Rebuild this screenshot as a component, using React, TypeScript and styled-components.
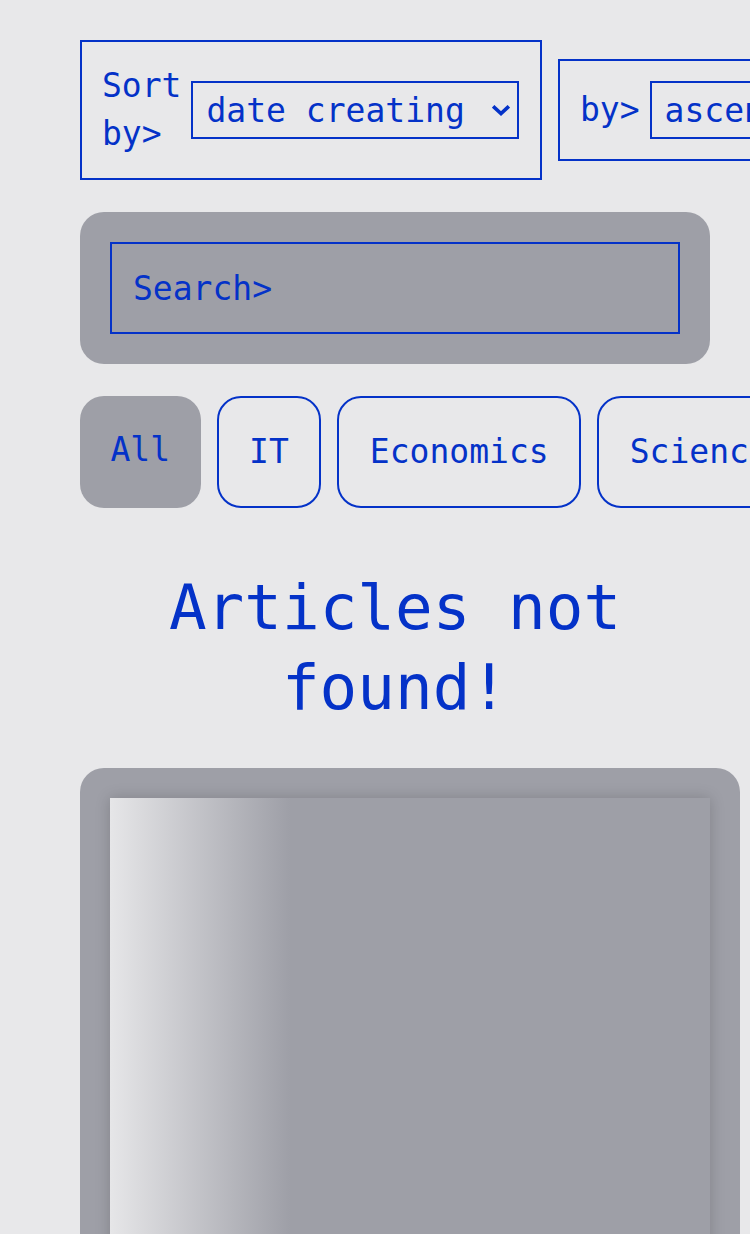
import React from 'react';
import styled, { createGlobalStyle } from 'styled-components';

const BLUE = '#0432c8';
const GRAY = '#9e9fa7';
const BG = '#e8e8ea';

const GlobalStyle = createGlobalStyle`
  html, body {
    margin: 0;
    padding: 0;
    background: ${BG};
    overflow: hidden;
  }
  body {
    font-family: 'DejaVu Sans Mono', 'Liberation Mono', monospace;
    color: ${BLUE};
  }
`;

const Page = styled.main`
  width: 630px;
  padding: 40px 0 0 80px;
  display: flex;
  flex-direction: column;
`;

const SortRow = styled.div`
  display: flex;
  align-items: center;
  gap: 16px;
`;

const SortBox = styled.label<{ $width: number }>`
  flex-shrink: 0;
  box-sizing: border-box;
  width: ${(p) => p.$width}px;
  display: flex;
  align-items: center;
  gap: 10px;
  padding: 20px;
  border: 2px solid ${BLUE};
`;

const SortLabel = styled.span`
  width: min-content;
  font-size: 33px;
  line-height: 48px;
`;

const SelectWrap = styled.div`
  position: relative;
  display: flex;
`;

const Select = styled.select<{ $width: number }>`
  appearance: none;
  box-sizing: border-box;
  width: ${(p) => p.$width}px;
  height: 58px;
  padding: 0 40px 0 13px;
  border: 2px solid ${BLUE};
  border-radius: 0;
  background: transparent;
  color: ${BLUE};
  font-family: inherit;
  font-size: 33px;
  outline: none;
`;

const Chevron = styled.svg`
  position: absolute;
  right: 9px;
  top: 50%;
  width: 18px;
  height: 11px;
  margin-top: -5px;
  pointer-events: none;
`;

const SearchPanel = styled.div`
  margin-top: 32px;
  padding: 30px;
  border-radius: 24px;
  background: ${GRAY};
`;

const SearchInput = styled.input`
  box-sizing: border-box;
  display: block;
  width: 100%;
  height: 92px;
  padding: 0 21px;
  border: 2px solid ${BLUE};
  background: transparent;
  color: ${BLUE};
  font-family: inherit;
  font-size: 33px;
  outline: none;

  &::placeholder {
    color: ${BLUE};
    opacity: 1;
  }
`;

const Chips = styled.div`
  margin-top: 32px;
  display: flex;
  gap: 16px;
`;

const Chip = styled.div<{ $active?: boolean }>`
  flex-shrink: 0;
  padding: 30px 30.5px;
  border-radius: 24px;
  font-size: 33px;
  line-height: 48px;
  border: ${(p) => (p.$active ? 'none' : `2px solid ${BLUE}`)};
  background: ${(p) => (p.$active ? GRAY : 'transparent')};
`;

const Title = styled.h1`
  margin: 60px 0 40px;
  text-align: center;
  font-size: 62.6px;
  line-height: 80px;
  font-weight: 400;
`;

const Card = styled.div`
  width: 600px;
  padding: 30px;
  border-radius: 24px;
  background: ${GRAY};
`;

const Thumb = styled.div`
  height: 700px;
  background: linear-gradient(90deg, #e6e6e8 0%, ${GRAY} 30%);
  box-shadow: 0 0 14px rgba(0, 0, 0, 0.18);
`;

const categories = ['All', 'IT', 'Economics', 'Science', 'Design'];

const Dropdown = ({
  width,
  value,
  options,
}: {
  width: number;
  value: string;
  options: [string, string][];
}) => (
  <SelectWrap>
    <Select $width={width} defaultValue={value}>
      {options.map(([v, label]) => (
        <option key={v} value={v}>
          {label}
        </option>
      ))}
    </Select>
    <Chevron viewBox="0 0 18 11" fill="none">
      <path d="M2.5 2.5 L9 8.5 L15.5 2.5" stroke={BLUE} strokeWidth="3.6" strokeLinecap="square" />
    </Chevron>
  </SelectWrap>
);

export default function App() {
  return (
    <>
      <GlobalStyle />
      <Page>
        <SortRow>
          <SortBox $width={462}>
            <SortLabel>Sort by&gt;</SortLabel>
            <Dropdown
              width={328}
              value="date"
              options={[
                ['date', 'date creating'],
                ['title', 'title'],
              ]}
            />
          </SortBox>
          <SortBox $width={420}>
            <SortLabel>by&gt;</SortLabel>
            <Dropdown
              width={280}
              value="asc"
              options={[
                ['asc', 'ascending'],
                ['desc', 'descending'],
              ]}
            />
          </SortBox>
        </SortRow>

        <SearchPanel>
          <SearchInput placeholder="Search>" />
        </SearchPanel>

        <Chips>
          {categories.map((c, i) => (
            <Chip key={c} $active={i === 0}>
              {c}
            </Chip>
          ))}
        </Chips>

        <Title>Articles not found!</Title>

        <Card>
          <Thumb />
        </Card>
      </Page>
    </>
  );
}
